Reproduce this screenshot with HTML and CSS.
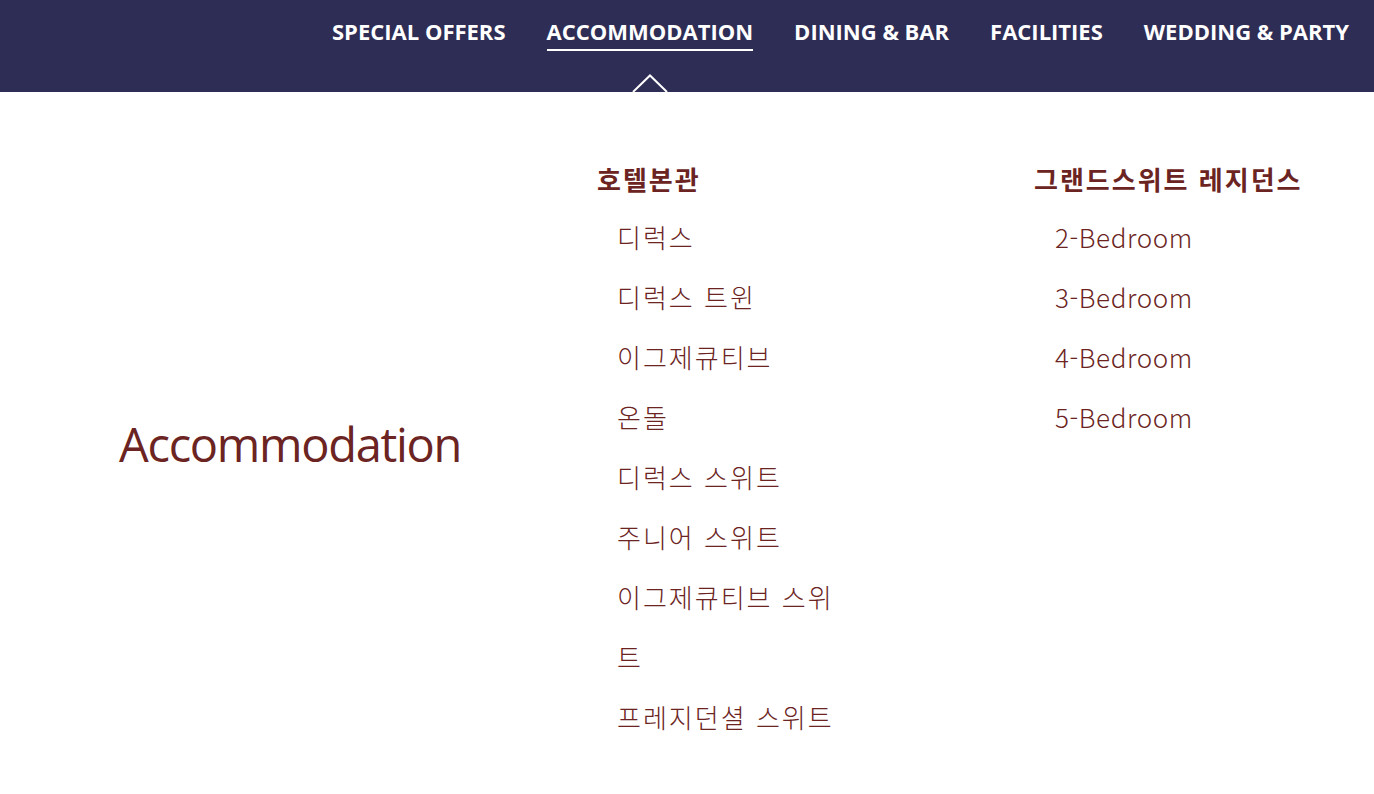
FILE: index.html
```html
<!DOCTYPE html>
<html lang="ko">
<head>
    <meta charset="UTF-8">
    <meta name="viewport" content="width=device-width, initial-scale=1.0">
    <title>Accommodation</title>
    <link rel="stylesheet" href="styles.css">
</head>
<body>
    <header class="top-bar">
        <nav class="main-nav">
            <a class="nav-item" href="#">SPECIAL OFFERS</a>
            <a class="nav-item active" href="#">ACCOMMODATION
                <svg class="nav-caret" width="36" height="18" viewBox="0 0 36 18">
                    <polyline points="1,18 18,1.5 35,18" fill="none" stroke="#ffffff" stroke-width="2"/>
                </svg>
            </a>
            <a class="nav-item" href="#">DINING &amp; BAR</a>
            <a class="nav-item" href="#">FACILITIES</a>
            <a class="nav-item" href="#">WEDDING &amp; PARTY</a>
        </nav>
    </header>

    <section class="mega-menu">
        <div class="menu-title">Accommodation</div>

        <div class="menu-col col-main">
            <div class="col-heading">호텔본관</div>
            <ul class="col-list">
                <li><a href="#">디럭스</a></li>
                <li><a href="#">디럭스 트윈</a></li>
                <li><a href="#">이그제큐티브</a></li>
                <li><a href="#">온돌</a></li>
                <li><a href="#">디럭스 스위트</a></li>
                <li><a href="#">주니어 스위트</a></li>
                <li><a href="#">이그제큐티브 스위트</a></li>
                <li><a href="#">프레지던셜 스위트</a></li>
            </ul>
        </div>

        <div class="menu-col col-residence">
            <div class="col-heading">그랜드스위트 레지던스</div>
            <ul class="col-list">
                <li><a href="#">2-Bedroom</a></li>
                <li><a href="#">3-Bedroom</a></li>
                <li><a href="#">4-Bedroom</a></li>
                <li><a href="#">5-Bedroom</a></li>
            </ul>
        </div>
    </section>
</body>
</html>
```

FILE: styles.css
```css
/* 기본 */
body {
    margin: 0;
    background-color: #ffffff;
    font-family: "Noto Sans CJK KR", "Noto Sans", sans-serif;
    color: #6b2422;
}

a {
    color: inherit;
    text-decoration: none;
}

/* 상단 메뉴 */
.top-bar {
    height: 92px;
    background-color: #2e2d55;
}

.main-nav {
    display: flex;
    justify-content: flex-end;
    gap: 41px;
    padding: 16px 25px 0 0;
}

.nav-item {
    position: relative;
    font-family: "Open Sans", sans-serif;
    font-weight: 700;
    font-size: 22px;
    line-height: 30px;
    color: #ffffff;
    padding-bottom: 3px;
    border-bottom: 2px solid transparent;
}

.nav-item.active {
    border-bottom-color: #ffffff;
}

.nav-caret {
    position: absolute;
    left: 50%;
    top: 58px;
    margin-left: -18px;
}

/* 메가 메뉴 */
.mega-menu {
    display: flex;
    align-items: center;
    padding: 72px 0 46px 119px;
}

.menu-title {
    width: 478px;
    margin-top: -22px;
    font-family: "Open Sans", sans-serif;
    font-size: 47px;
    line-height: 1;
    letter-spacing: -1.3px;
}

.col-main {
    width: 437px;
}

.col-heading {
    font-weight: 700;
    font-size: 26px;
    line-height: 30px;
    margin-bottom: 13px;
    letter-spacing: 2px;
}

.col-list {
    list-style: none;
    margin: 0;
    padding: 0 0 0 20px;
    width: 225px;
    font-weight: 300;
    font-size: 26px;
    line-height: 60px;
    letter-spacing: 2px;
}

.col-residence {
    align-self: flex-start;
}

.col-residence .col-list {
    padding-left: 21px;
    letter-spacing: 0.6px;
}
```
